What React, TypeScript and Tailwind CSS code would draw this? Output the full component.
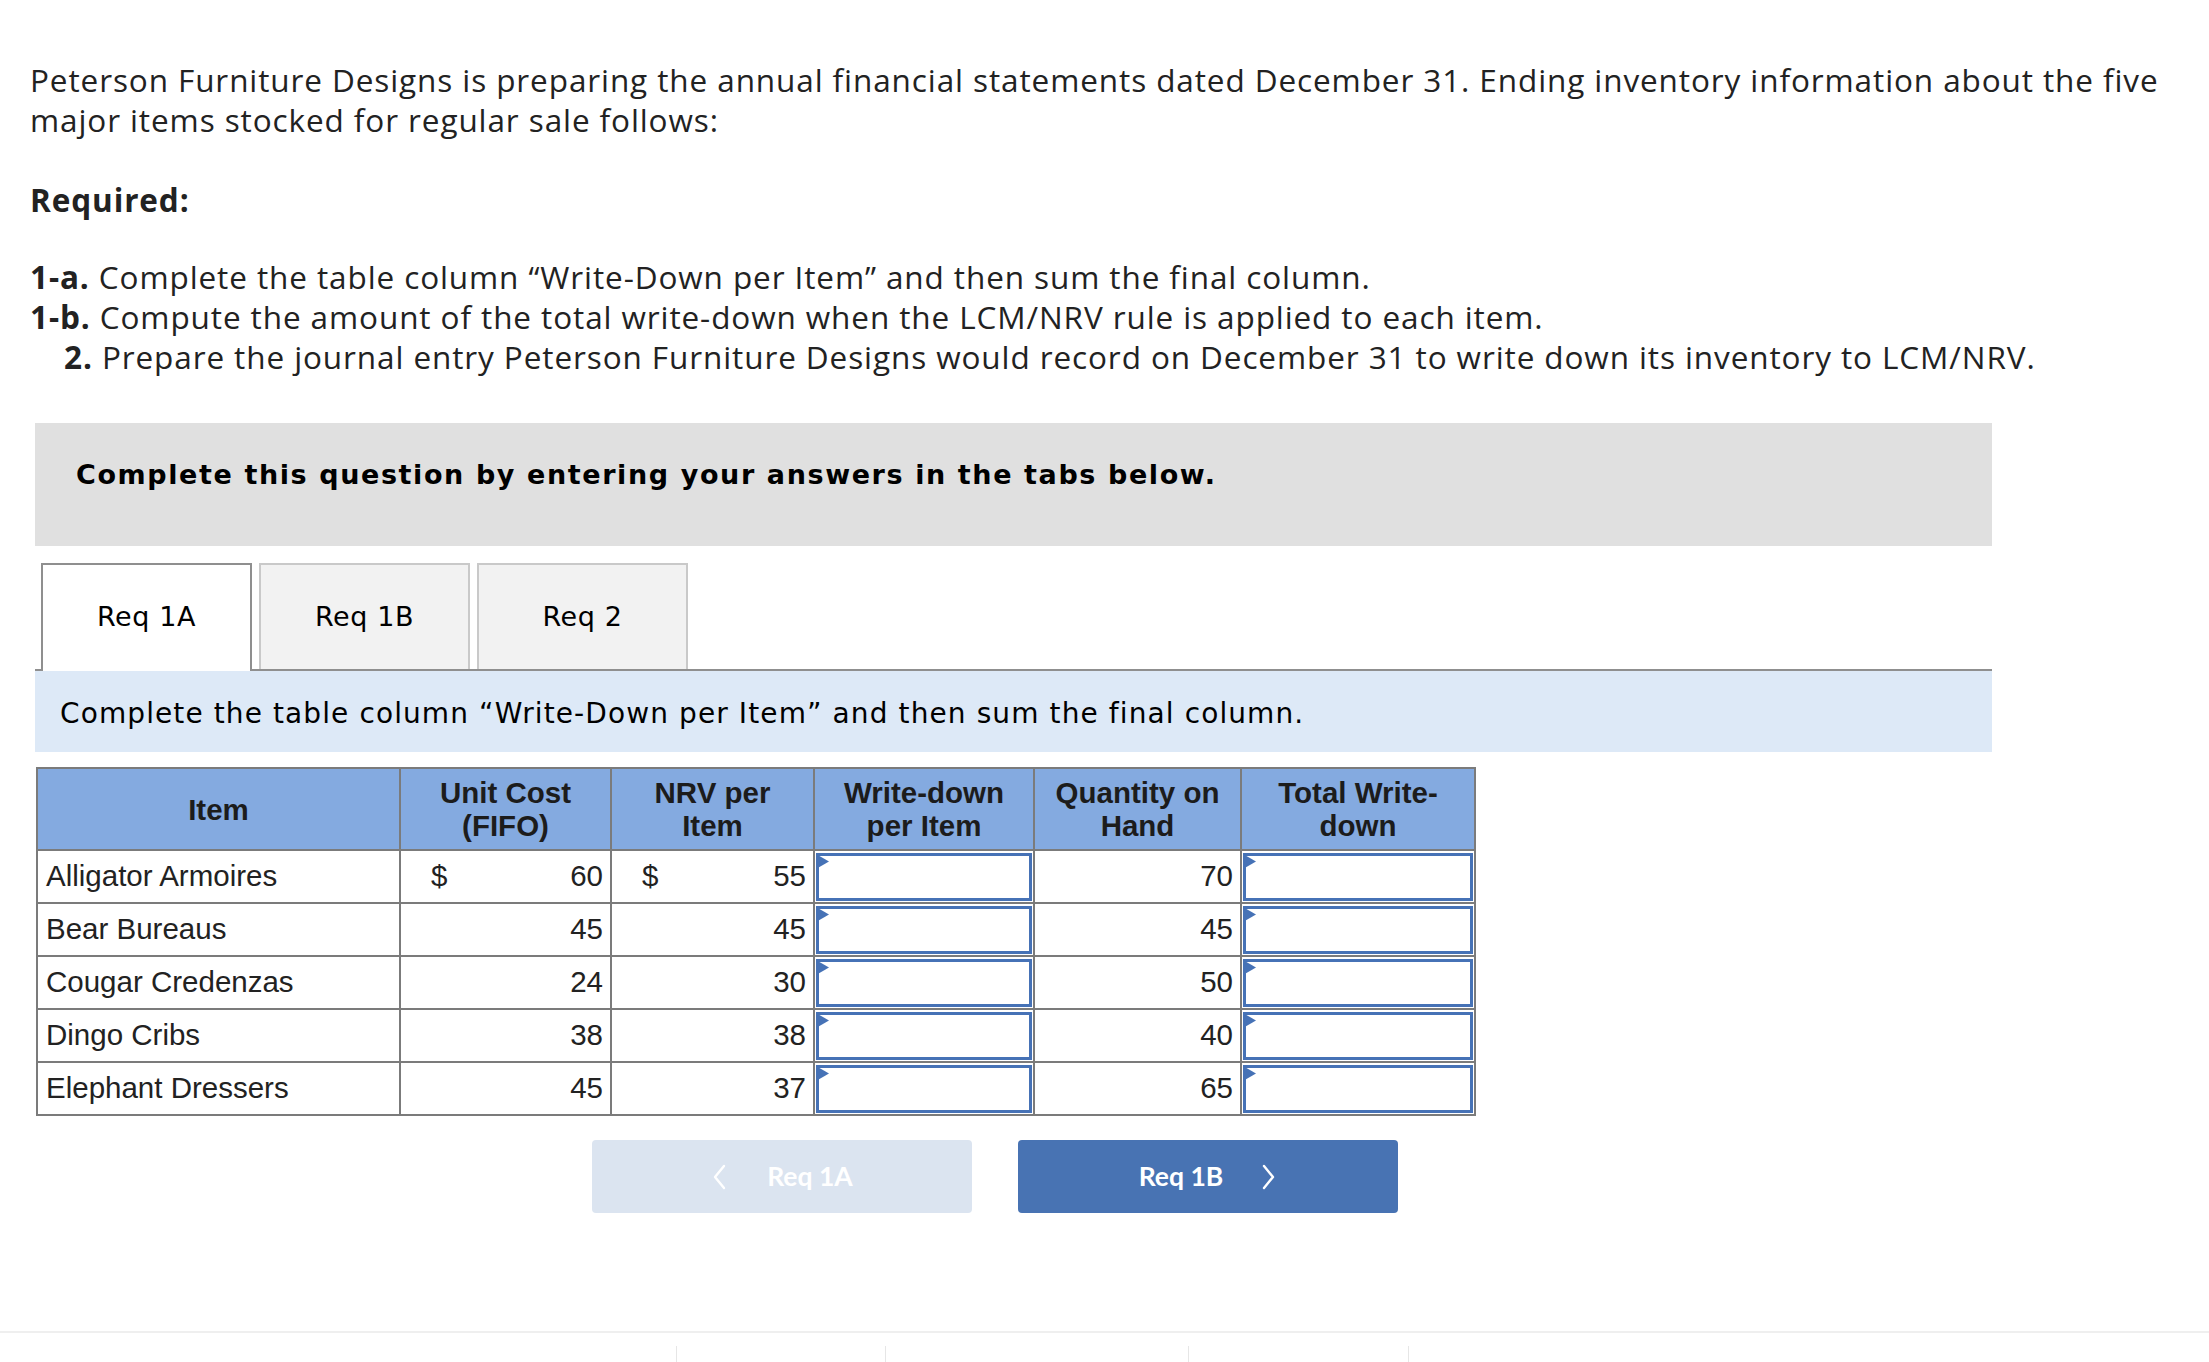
import React from "react";

const rows = [
  { item: "Alligator Armoires", cost: "60", nrv: "55", qty: "70", dollar: true },
  { item: "Bear Bureaus", cost: "45", nrv: "45", qty: "45", dollar: false },
  { item: "Cougar Credenzas", cost: "24", nrv: "30", qty: "50", dollar: false },
  { item: "Dingo Cribs", cost: "38", nrv: "38", qty: "40", dollar: false },
  { item: "Elephant Dressers", cost: "45", nrv: "37", qty: "65", dollar: false },
];

function InputCell() {
  return (
    <td className="border-2 border-[#7b7b7b] p-[1px] h-[53px]">
      <div className="relative h-[48px] w-full border-[3px] border-[#4672b6] bg-white">
        <svg className="absolute left-[-3px] top-[-2px]" width="13" height="15" viewBox="0 0 13 15">
          <polygon points="0,0 13,7.5 0,15" fill="#4672b6" />
        </svg>
      </div>
    </td>
  );
}

function Chevron({ dir }: { dir: "left" | "right" }) {
  return (
    <svg width="16" height="26" viewBox="0 0 16 26" fill="none">
      <path
        d={dir === "left" ? "M13 2 L4 13 L13 24" : "M3 2 L12 13 L3 24"}
        stroke="white"
        strokeWidth="2.4"
        strokeLinecap="round"
        strokeLinejoin="round"
      />
    </svg>
  );
}

export default function App() {
  return (
    <div className="relative min-h-[1362px] w-full overflow-hidden bg-white">
      <div className="pl-[30px] pt-[60px] font-['Open_Sans',sans-serif] text-[31.5px] leading-[40px] tracking-[0.9px] text-[#222]">
        <p className="whitespace-nowrap">
          Peterson Furniture Designs is preparing the annual financial statements dated December 31. Ending inventory information about the five
          <br />
          major items stocked for regular sale follows:
        </p>
        <p className="mt-[40px] font-bold">Required:</p>
        <div className="mt-[37px] whitespace-nowrap">
          <p>
            <b>1-a.</b> Complete the table column “Write-Down per Item” and then sum the final column.
          </p>
          <p>
            <b>1-b.</b> Compute the amount of the total write-down when the LCM/NRV rule is applied to each item.
          </p>
          <p className="pl-[34px]">
            <b>2.</b> Prepare the journal entry Peterson Furniture Designs would record on December 31 to write down its inventory to LCM/NRV.
          </p>
        </div>
      </div>

      <div className="ml-[35px] mt-[46px] w-[1957px]">
        <div className="h-[123px] bg-[#e0e0e0] pl-[41px] pt-[36px] font-['DejaVu_Sans',sans-serif] text-[27px] font-bold leading-[32px] tracking-[1.6px] text-black">
          Complete this question by entering your answers in the tabs below.
        </div>

        <div className="mt-[19px] flex h-[106px] items-end gap-[7px] border-b-2 border-[#8f8f8f] pl-[6px] font-['DejaVu_Sans',sans-serif] text-[27px] tracking-[0.6px] text-black">
          <div className="relative -mb-[2px] flex h-[108px] w-[211px] items-center justify-center border-2 border-b-0 border-[#8f8f8f] bg-white pb-[2px]">
            Req 1A
          </div>
          <div className="flex h-[106px] w-[211px] items-center justify-center border-2 border-b-0 border-[#c9c9c9] bg-[#f2f2f2]">
            Req 1B
          </div>
          <div className="flex h-[106px] w-[211px] items-center justify-center border-2 border-b-0 border-[#c9c9c9] bg-[#f2f2f2]">
            Req 2
          </div>
        </div>

        <div className="flex h-[81px] items-center bg-[#dde9f7] pl-[25px] pt-[5px] font-['DejaVu_Sans',sans-serif] text-[28px] tracking-[1.1px] text-black">
          Complete the table column “Write-Down per Item” and then sum the final column.
        </div>

        <table className="ml-[1px] mt-[15px] w-[1438px] table-fixed border-collapse font-['Liberation_Sans',Arial,sans-serif] text-[29.5px] text-[#222]">
          <colgroup>
            <col className="w-[363px]" />
            <col className="w-[211px]" />
            <col className="w-[203px]" />
            <col className="w-[220px]" />
            <col className="w-[207px]" />
            <col className="w-[234px]" />
          </colgroup>
          <thead>
            <tr className="h-[82px] bg-[#84aae0] text-[29.5px] font-bold leading-[33px] text-[#1c1c1c]">
              <th className="border-2 border-[#7b7b7b] font-bold">Item</th>
              <th className="border-2 border-[#7b7b7b] font-bold">
                Unit Cost
                <br />
                (FIFO)
              </th>
              <th className="border-2 border-[#7b7b7b] font-bold">
                NRV per
                <br />
                Item
              </th>
              <th className="border-2 border-[#7b7b7b] font-bold">
                Write-down
                <br />
                per Item
              </th>
              <th className="border-2 border-[#7b7b7b] font-bold">
                Quantity on
                <br />
                Hand
              </th>
              <th className="border-2 border-[#7b7b7b] font-bold">
                Total Write-
                <br />
                down
              </th>
            </tr>
          </thead>
          <tbody>
            {rows.map((r) => (
              <tr key={r.item} className="h-[53px]">
                <td className="border-2 border-[#7b7b7b] pl-[8px]">{r.item}</td>
                <td className="border-2 border-[#7b7b7b] pr-[7px]">
                  <div className="flex justify-between pl-[30px]">
                    <span>{r.dollar ? "$" : ""}</span>
                    <span>{r.cost}</span>
                  </div>
                </td>
                <td className="border-2 border-[#7b7b7b] pr-[7px]">
                  <div className="flex justify-between pl-[30px]">
                    <span>{r.dollar ? "$" : ""}</span>
                    <span>{r.nrv}</span>
                  </div>
                </td>
                <InputCell />
                <td className="border-2 border-[#7b7b7b] pr-[7px] text-right">{r.qty}</td>
                <InputCell />
              </tr>
            ))}
          </tbody>
        </table>

        <div className="ml-[557px] mt-[24px] flex gap-[46px] font-['Lato',sans-serif] text-[26.5px] font-bold text-white">
          <div className="flex h-[73px] w-[380px] items-center justify-center gap-[40px] rounded-[4px] bg-[#dbe4f0]">
            <Chevron dir="left" />
            <span>Req 1A</span>
          </div>
          <div className="flex h-[73px] w-[380px] items-center justify-center gap-[38px] rounded-[4px] bg-[#4873b3]">
            <span>Req 1B</span>
            <Chevron dir="right" />
          </div>
        </div>
      </div>

      <div className="absolute bottom-0 left-0 right-0 h-[31px] border-t-2 border-[#efefef]">
        <div className="flex pt-[13px]">
          <div className="w-[676px]" />
          <div className="h-[17px] w-px bg-[#e6e6e6]" />
          <div className="w-[208px]" />
          <div className="h-[17px] w-px bg-[#e6e6e6]" />
          <div className="w-[302px]" />
          <div className="h-[17px] w-px bg-[#e6e6e6]" />
          <div className="w-[219px]" />
          <div className="h-[17px] w-px bg-[#e6e6e6]" />
        </div>
      </div>
    </div>
  );
}
